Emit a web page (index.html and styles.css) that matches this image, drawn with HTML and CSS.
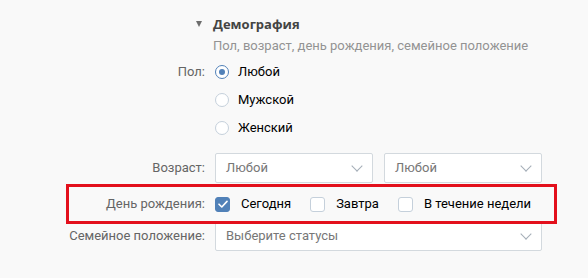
FILE: index.html
```html
<!DOCTYPE html>
<html lang="ru">
<head>
<meta charset="utf-8">
<link rel="stylesheet" href="styles.css">
</head>
<body>
<div class="page">
  <div class="section-head">
    <span class="tri"></span>
    <div class="head-text">
      <div class="title">Демография</div>
      <div class="sub">Пол, возраст, день рождения, семейное положение</div>
    </div>
  </div>

  <div class="row radio-row first">
    <div class="label">Пол:</div>
    <div class="control"><span class="radio checked"></span><span class="opt">Любой</span></div>
  </div>
  <div class="row radio-row">
    <div class="label"></div>
    <div class="control"><span class="radio"></span><span class="opt">Мужской</span></div>
  </div>
  <div class="row radio-row">
    <div class="label"></div>
    <div class="control"><span class="radio"></span><span class="opt">Женский</span></div>
  </div>

  <div class="row age-row">
    <div class="label">Возраст:</div>
    <div class="control selects">
      <div class="select half"><span class="sel-text">Любой</span><span class="chev"></span></div>
      <div class="select half"><span class="sel-text">Любой</span><span class="chev"></span></div>
    </div>
  </div>

  <div class="row bday-row">
    <div class="label">День рождения:</div>
    <div class="control checks">
      <div class="check-item"><span class="checkbox checked"><svg width="10" height="8" viewBox="0 0 10 8"><path d="M1 4.2 L3.8 7 L9 1.4" fill="none" stroke="#fff" stroke-width="1.6" stroke-linecap="round" stroke-linejoin="round"/></svg></span><span class="opt">Сегодня</span></div>
      <div class="check-item"><span class="checkbox"></span><span class="opt">Завтра</span></div>
      <div class="check-item"><span class="checkbox"></span><span class="opt">В течение недели</span></div>
    </div>
  </div>

  <div class="row family-row">
    <div class="label">Семейное положение:</div>
    <div class="control">
      <div class="select full"><span class="sel-text">Выберите статусы</span><span class="chev"></span></div>
    </div>
  </div>

  <div class="highlight"></div>
</div>
</body>
</html>
```

FILE: styles.css
```css
html, body {
  margin: 0;
  padding: 0;
  background: #f9f9f9;
}
body {
  font-family: Roboto, "Liberation Sans", sans-serif;
  font-size: 13px;
  color: #000;
  width: 588px;
  height: 278px;
  overflow: hidden;
}
.page {
  position: relative;
  padding-top: 16px;
}
.section-head {
  display: flex;
  align-items: flex-start;
  padding-left: 196px;
}
.tri {
  width: 0;
  height: 0;
  border-left: 3.5px solid transparent;
  border-right: 3.5px solid transparent;
  border-top: 6px solid #6d6d6d;
  margin-top: 5px;
  margin-right: 11px;
}
.title {
  font-family: "Open Sans", Roboto, sans-serif;
  font-size: 13px;
  font-weight: 700;
  color: #444;
  line-height: 16px;
}
.sub {
  margin-top: 6px;
  color: #939393;
  line-height: 16px;
}
.row {
  display: flex;
  align-items: center;
}
.label {
  width: 205px;
  flex: none;
  text-align: right;
  color: #656565;
  line-height: 16px;
}
.control {
  margin-left: 10px;
  display: flex;
  align-items: center;
}
.radio-row {
  height: 28px;
}
.radio-row.first {
  margin-top: 4px;
}
.radio {
  width: 14px;
  height: 14px;
  box-sizing: border-box;
  border: 1px solid #c5d0db;
  border-radius: 50%;
  background: #fff;
  position: relative;
  flex: none;
}
.radio.checked {
  border-color: #5181b8;
}
.radio.checked::after {
  content: "";
  position: absolute;
  left: 3px;
  top: 3px;
  width: 6px;
  height: 6px;
  border-radius: 50%;
  background: #5181b8;
}
.opt {
  margin-left: 9px;
  color: #000;
  line-height: 16px;
}
.age-row {
  margin-top: 11px;
}
.selects {
  gap: 11px;
}
.select {
  box-sizing: border-box;
  height: 30px;
  border: 1px solid #d3d9de;
  border-radius: 2px;
  background: #fff;
  display: flex;
  align-items: center;
  justify-content: space-between;
  padding: 0 9px 0 10px;
}
.select.half {
  width: 158px;
}
.select.full {
  width: 327px;
}
.sel-text {
  color: #777;
  line-height: 16px;
}
.chev {
  width: 7px;
  height: 7px;
  border-right: 1px solid #a4adb7;
  border-bottom: 1px solid #a4adb7;
  transform: rotate(45deg);
  margin-top: -5px;
  margin-right: 2px;
}
.bday-row {
  height: 28px;
  margin-top: 7px;
}
.checks {
  display: flex;
}
.check-item {
  display: flex;
  align-items: center;
  margin-right: 19px;
}
.checkbox {
  width: 15px;
  height: 15px;
  box-sizing: border-box;
  border: 1px solid #c5d0db;
  border-radius: 3px;
  background: #fff;
  display: flex;
  align-items: center;
  justify-content: center;
  flex: none;
}
.checkbox.checked {
  background: #5181b8;
  border-color: #5181b8;
}
.check-item .opt {
  margin-left: 11px;
}
.family-row {
  margin-top: 3px;
}
.highlight {
  position: absolute;
  left: 66px;
  top: 184px;
  width: 491px;
  height: 40px;
  box-sizing: border-box;
  border: 3px solid #e3101c;
}
```
